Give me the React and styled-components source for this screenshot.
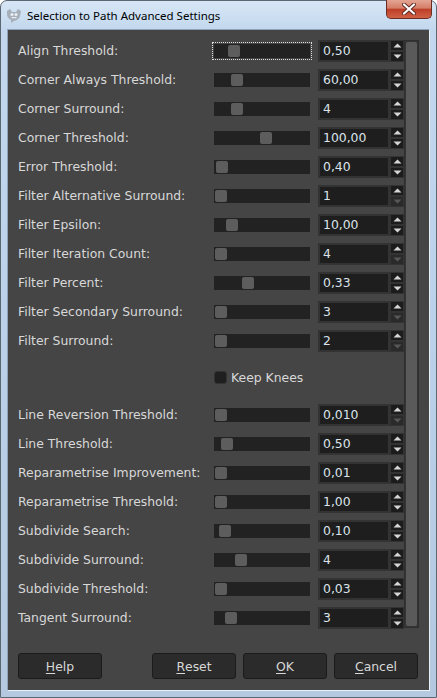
import styled, { createGlobalStyle } from "styled-components"

const GlobalStyle = createGlobalStyle`
  html, body { margin: 0; padding: 0; background: #fff; }
  body { font-family: "DejaVu Sans", "Liberation Sans", sans-serif; }
`

const rowsTop = [
  { label: "Align Threshold:", value: "0,50", pos: 14, focus: true },
  { label: "Corner Always Threshold:", value: "60,00", pos: 17 },
  { label: "Corner Surround:", value: "4", pos: 17 },
  { label: "Corner Threshold:", value: "100,00", pos: 46 },
  { label: "Error Threshold:", value: "0,40", pos: 2 },
  { label: "Filter Alternative Surround:", value: "1", pos: 1, atMin: true },
  { label: "Filter Epsilon:", value: "10,00", pos: 12 },
  { label: "Filter Iteration Count:", value: "4", pos: 1, atMin: true },
  { label: "Filter Percent:", value: "0,33", pos: 28 },
  { label: "Filter Secondary Surround:", value: "3", pos: 1, atMin: true },
  { label: "Filter Surround:", value: "2", pos: 1, atMin: true },
]

const rowsBottom = [
  { label: "Line Reversion Threshold:", value: "0,010", pos: 1, atMin: true },
  { label: "Line Threshold:", value: "0,50", pos: 7 },
  { label: "Reparametrise Improvement:", value: "0,01", pos: 1 },
  { label: "Reparametrise Threshold:", value: "1,00", pos: 1 },
  { label: "Subdivide Search:", value: "0,10", pos: 5 },
  { label: "Subdivide Surround:", value: "4", pos: 21 },
  { label: "Subdivide Threshold:", value: "0,03", pos: 1 },
  { label: "Tangent Surround:", value: "3", pos: 11 },
]

function Arrow({ up, disabled }) {
  return (
    <svg width="9" height="5" viewBox="0 0 9 5">
      <path
        d={up ? "M0.5 4.5 L4.5 0.5 L8.5 4.5 Z" : "M0.5 0.5 L4.5 4.5 L8.5 0.5 Z"}
        fill={disabled ? "#575757" : "#d6d6d6"}
      />
    </svg>
  )
}

function SettingRow({ label, value, pos, focus, atMin }) {
  return (
    <Row>
      <Label>{label}</Label>
      <Track $focus={focus}>
        <Thumb style={{ left: pos }} />
      </Track>
      <Spin>
        <Entry>{value}</Entry>
        <Steppers>
          <Step><Arrow up /></Step>
          <Step $dim={atMin}><Arrow disabled={atMin} /></Step>
        </Steppers>
      </Spin>
    </Row>
  )
}

function GimpIcon() {
  return (
    <svg width="18" height="16" viewBox="0 0 18 16">
      <path d="M2 4 L5 2 L7 5 L11 5 L13 2 L16 4 L15 9 Q14 13 9 14 L6 16 L6 13 Q2 11 2 7 Z" fill="#a7b0ba" />
      <circle cx="7" cy="7.5" r="1.6" fill="#e8edf2" />
      <circle cx="11" cy="7.5" r="1.6" fill="#e8edf2" />
      <rect x="6.5" y="10" width="5" height="1.2" fill="#e8edf2" />
    </svg>
  )
}

export default function App() {
  return (
    <>
      <GlobalStyle />
      <Window>
        <TitleBar>
          <GimpIcon />
          <Title>Selection to Path Advanced Settings</Title>
          <CloseButton>
            <svg width="14" height="12" viewBox="0 0 14 12">
              <path d="M2 1.5 L12 10.5 M12 1.5 L2 10.5" stroke="#5b2a22" strokeWidth="4" strokeLinecap="round" />
              <path d="M2 1.5 L12 10.5 M12 1.5 L2 10.5" stroke="#ffffff" strokeWidth="2.2" strokeLinecap="round" />
            </svg>
          </CloseButton>
        </TitleBar>
        <Content>
          <ScrollArea>
            <RowList>
              {rowsTop.map((r) => <SettingRow key={r.label} {...r} />)}
              <CheckRow>
                <Box />
                <CheckLabel>Keep Knees</CheckLabel>
              </CheckRow>
              {rowsBottom.map((r) => <SettingRow key={r.label} {...r} />)}
            </RowList>
            <Scrollbar>
              <ScrollThumb />
            </Scrollbar>
          </ScrollArea>
          <ButtonBar>
            <Button><u>H</u>elp</Button>
            <Spacer />
            <Button><u>R</u>eset</Button>
            <Button><u>O</u>K</Button>
            <Button><u>C</u>ancel</Button>
          </ButtonBar>
        </Content>
      </Window>
    </>
  )
}

const Window = styled.div`
  box-sizing: border-box;
  width: 437px;
  height: 698px;
  border: 1px solid #5b6773;
  border-radius: 7px 7px 0 0;
  background: linear-gradient(180deg, #d7e6f6 0px, #c3d8ee 28px, #bcd2ea 300px, #b4c9df 698px);
  padding-bottom: 6px;
  display: flex;
  flex-direction: column;
`
const TitleBar = styled.div`
  height: 28px;
  display: flex;
  align-items: center;
  padding-left: 4px;
  position: relative;
  svg { flex: none; }
`
const Title = styled.span`
  margin-left: 4px;
  font-family: "Noto Sans", "Liberation Sans", sans-serif;
  font-size: 11.5px;
  color: #000;
`
const CloseButton = styled.div`
  position: absolute;
  top: -1px;
  right: 4px;
  width: 46px;
  height: 19px;
  box-sizing: border-box;
  border: 1px solid #6b2c22;
  border-top: none;
  border-radius: 0 0 5px 5px;
  background: linear-gradient(180deg, #e4a594 0%, #d47e68 45%, #be3e28 52%, #cf6246 100%);
  display: flex;
  align-items: center;
  justify-content: center;
`
const Content = styled.div`
  flex: 1;
  margin: 0 6px;
  box-sizing: border-box;
  background: #454545;
  border: 1px solid #e9f0f8;
  border-color: #8fa3b8 #e9f0f8 #e9f0f8 #8fa3b8;
  padding: 6px 10px 0 10px;
  display: flex;
  flex-direction: column;
`
const ScrollArea = styled.div`
  display: flex;
  align-items: flex-start;
`
const RowList = styled.div`
  display: flex;
  flex-direction: column;
`
const Row = styled.div`
  height: 29px;
  display: flex;
  align-items: center;
`
const Label = styled.div`
  width: 196px;
  font-size: 12.4px;
  color: #d8d8d8;
  white-space: nowrap;
`
const Track = styled.div`
  position: relative;
  width: 96px;
  height: 14px;
  background: #222;
  outline: ${(p) => (p.$focus ? "1px dotted #e0e0e0" : "none")};
  outline-offset: 1px;
`
const Thumb = styled.div`
  position: absolute;
  top: 1px;
  width: 12px;
  height: 12px;
  border-radius: 2px;
  background: #5d5d5d;
`
const Spin = styled.div`
  margin-left: 8px;
  height: 22px;
  display: flex;
`
const Entry = styled.div`
  box-sizing: border-box;
  width: 72px;
  height: 22px;
  border: 2px solid #333;
  background: #1e1e1e;
  padding-left: 3px;
  font-size: 12.4px;
  line-height: 18px;
  color: #dbe3ea;
`
const Steppers = styled.div`
  width: 14px;
  display: flex;
  flex-direction: column;
`
const Step = styled.div`
  box-sizing: border-box;
  height: 11px;
  border: 1px solid #333;
  background: ${(p) => (p.$dim ? "#2a2a2a" : "#1c1c1c")};
  display: flex;
  align-items: center;
  justify-content: center;
`
const CheckRow = styled.div`
  height: 45px;
  display: flex;
  align-items: center;
  padding-left: 196px;
`
const Box = styled.div`
  width: 13px;
  height: 13px;
  box-sizing: border-box;
  border-radius: 3px;
  background: #1f1f1f;
  border: 1px solid #333;
`
const CheckLabel = styled.span`
  margin-left: 4px;
  font-size: 12.4px;
  color: #d8d8d8;
`
const Scrollbar = styled.div`
  margin-top: 4px;
  width: 15px;
  height: 588px;
  box-sizing: border-box;
  background: #353535;
  border: 1px solid #2e2e2e;
  padding: 1px;
`
const ScrollThumb = styled.div`
  height: 100%;
  border-radius: 2px;
  background: #5a5a5a;
`
const ButtonBar = styled.div`
  margin-top: 21px;
  display: flex;
  gap: 7px;
  padding-right: 1px;
`
const Spacer = styled.div`
  flex: 1;
`
const Button = styled.div`
  width: 84px;
  height: 26px;
  box-sizing: border-box;
  border: 1px solid #1b1b1b;
  border-radius: 3px;
  background: #2b2b2b;
  color: #d8d8d8;
  font-size: 12.4px;
  display: flex;
  align-items: center;
  justify-content: center;
  u { text-underline-offset: 2px; }
`
